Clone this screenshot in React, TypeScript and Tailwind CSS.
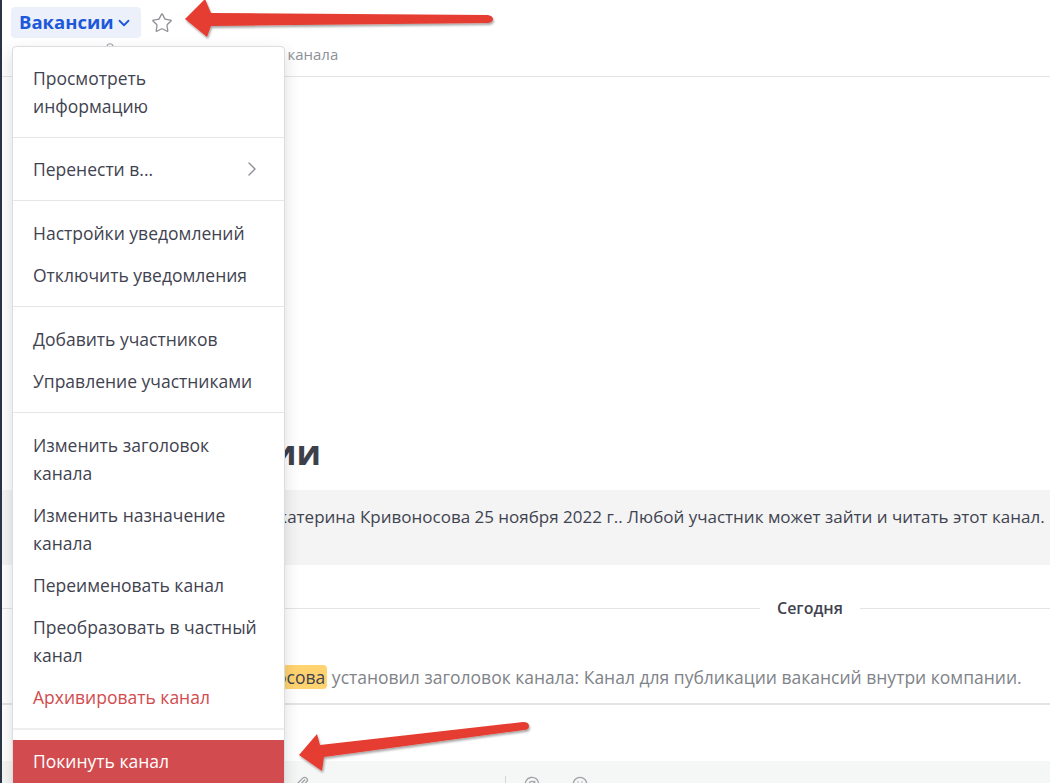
import { ChevronDown, ChevronRight, Star, Smile, AtSign, Paperclip, UserRound } from 'lucide-react'

type Item = { label: string; danger?: boolean; sub?: boolean; leave?: boolean }

const MENU_GROUPS: Item[][] = [
  [{ label: 'Просмотреть информацию' }],
  [{ label: 'Перенести в...', sub: true }],
  [{ label: 'Настройки уведомлений' }, { label: 'Отключить уведомления' }],
  [{ label: 'Добавить участников' }, { label: 'Управление участниками' }],
  [
    { label: 'Изменить заголовок канала' },
    { label: 'Изменить назначение канала' },
    { label: 'Переименовать канал' },
    { label: 'Преобразовать в частный канал' },
    { label: 'Архивировать канал', danger: true },
  ],
  [{ label: 'Покинуть канал', leave: true }],
]

function ChannelMenu() {
  return (
    <div className="absolute left-[12px] top-[46px] w-[273px] bg-white border border-[#dcdde0] rounded-[4px] shadow-[0_6px_16px_rgba(0,0,0,0.14)] pt-[10px] pb-[10px]">
      {MENU_GROUPS.map((group, gi) => (
        <div key={gi}>
          {gi > 0 && (
            <div
              className={
                gi === MENU_GROUPS.length - 1
                  ? 'h-[2px] bg-[#eeeeef] my-[10px]'
                  : gi === 1
                    ? 'h-px bg-[#e6e6e8] my-[10px]'
                    : 'h-px bg-[#e6e6e8] mt-[10px] mb-[11px]'
              }
            />
          )}
          {group.map(item => (
            <div
              key={item.label}
              className={`flex items-center justify-between pl-[20px] pr-[24px] pt-[7px] text-[17.5px] leading-[28px] ${
                item.leave ? 'bg-[#d24b4e] text-white pb-[30px]' : item.danger ? 'text-[#d24b4e] pb-[7px]' : 'text-[#3f4350] pb-[7px]'
              }`}
            >
              <span>{item.label}</span>
              {item.sub && <ChevronRight size={24} strokeWidth={1.4} className="text-[#8b8d94] shrink-0 -mr-[4px]" />}
            </div>
          ))}
        </div>
      ))}
    </div>
  )
}

function Arrows() {
  return (
    <svg className="absolute inset-0 pointer-events-none" width="1050" height="783" viewBox="0 0 1050 783">
      <defs>
        <filter id="sh" x="-10%" y="-50%" width="120%" height="200%">
          <feDropShadow dx="1" dy="2" stdDeviation="1.3" floodColor="#000" floodOpacity="0.35" />
        </filter>
      </defs>
      <path
        d="M185 19 L205 -1 L211 13 L488 15 Q493 16 493 19 Q493 22 488 23 L211 26 L207 37 Z"
        fill="#e53d30"
        filter="url(#sh)"
      />
      <path
        d="M299 755 L317 734 L320 745 L523 722 Q529 722 529 726 Q529 730 524 730 L324 757 L322 771 Z"
        fill="#e53d30"
        filter="url(#sh)"
      />
    </svg>
  )
}

export default function App() {
  return (
    <div className="relative w-[1050px] h-[783px] overflow-hidden bg-white flex font-['Open_Sans',sans-serif]">
      <div className="w-[2px] shrink-0 bg-[#2a3546]" />

      <div className="flex-1 min-w-0 flex flex-col">
        {/* channel header */}
        <div className="h-[77px] shrink-0 border-b border-[#e3e4e6] pl-[9px] pt-[7px]">
          <div className="flex items-center">
            <div className="h-[31px] px-[8px] rounded-[4px] bg-[#ebf0fb] flex items-center">
              <span className="text-[18.5px] font-bold leading-none text-[#1c58d9]">Вакансии</span>
              <ChevronDown size={18} strokeWidth={2.4} className="text-[#1c58d9] ml-[1px]" />
            </div>
            <Star size={22} strokeWidth={1.4} className="text-[#8f9096] ml-[10px]" />
          </div>
          <div className="mt-[6px] flex items-start h-[20px] text-[15px] leading-[20px] text-[#8d9097] whitespace-nowrap">
            <UserRound size={14} className="ml-[92px] -mt-[2px] text-[#a4a6ab]" />
            <span className="ml-[18px]">Добавить заголовок канала</span>
          </div>
        </div>

        {/* posts */}
        <div className="flex-1 min-h-0 flex flex-col justify-end">
          <h2 className="pl-[145px] text-[34px] font-bold leading-[44px] text-[#3d3f4a]">Вакансии</h2>
          <div className="mt-[16px] h-[75px] bg-[#f4f4f4] pt-[14px] pl-[48px] text-[17px] leading-[26px] text-[#3f4350] whitespace-nowrap overflow-hidden">
            Публичный канал создан: Екатерина Кривоносова 25 ноября 2022 г.. Любой участник может зайти и читать этот канал.
          </div>
          <div className="mt-[28px] h-[30px] flex items-center">
            <div className="w-[758px] h-px bg-[#e3e4e6]" />
            <span className="px-[17px] text-[16px] font-semibold text-[#3f4350]">Сегодня</span>
            <div className="flex-1 h-px bg-[#e3e4e6]" />
          </div>
          <div className="mt-[41px] pb-[13px] pl-[100px] text-[17.5px] leading-[26px] text-[#808389] whitespace-nowrap">
            <span className="bg-[#ffd470] rounded-[4px] px-[2px] text-[#3f4350]">@екатерина.кривоносова</span>{' '}
            установил заголовок канала: Канал для публикации вакансий внутри компании.
          </div>
        </div>

        {/* input area */}
        <div className="h-[80px] shrink-0 border-t-2 border-[#e3e4e6] flex flex-col">
          <div className="h-[56px] shrink-0" />
          <div className="flex-1 min-h-0 overflow-hidden bg-[#f5f6f6] flex items-start pt-[15px] pl-[292px] text-[#a0a2a7]">
            <Paperclip size={16} className="shrink-0" />
            <div className="ml-[195px] w-px h-[20px] shrink-0 bg-[#d4d5d8]" />
            <AtSign size={16} className="ml-[18px] shrink-0" />
            <Smile size={16} className="ml-[32px] shrink-0" />
          </div>
        </div>
      </div>

      <ChannelMenu />
      <Arrows />
    </div>
  )
}
